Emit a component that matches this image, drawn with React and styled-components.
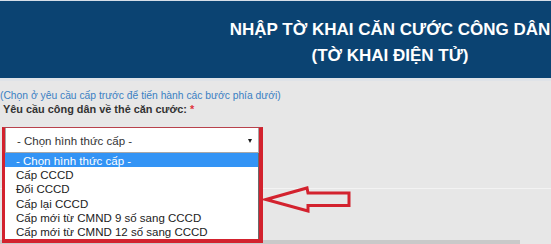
import React from "react";
import styled, { createGlobalStyle } from "styled-components";

const Global = createGlobalStyle`
  html, body { margin: 0; padding: 0; background: #e7e7e7; }
  body { font-family: "Liberation Sans", Arial, sans-serif; }
  * { box-sizing: border-box; }
`;

const Page = styled.div`
  width: 551px;
  height: 244px;
  overflow: hidden;
  background: #e7e7e7;
`;

const Header = styled.header`
  height: 81px;
  background: #0b4372;
  border-top: 1px solid #d6dee8;
  border-bottom: 3px solid #dfe3e8;
  padding: 16px 0 0 229px;
`;

const Title = styled.h1`
  margin: 0;
  color: #ffffff;
  font-size: 17px;
  font-weight: bold;
  line-height: 26px;
  text-align: center;
  white-space: nowrap;
`;

const Hint = styled.p`
  margin: 8px 0 0 0;
  font-size: 10.3px;
  line-height: 13px;
  color: #3a80c3;
  white-space: nowrap;
`;

const Label = styled.label`
  display: block;
  padding-left: 3px;
  font-size: 10.9px;
  line-height: 14px;
  font-weight: bold;
  color: #333333;
`;

const Required = styled.span`
  color: #e0333c;
  margin-left: 3px;
  font-weight: bold;
`;

const FieldArea = styled.div`
  position: relative;
  margin-top: 11px;
`;

const SelectBox = styled.div`
  margin-left: 5px;
  width: 254px;
  height: 26px;
  background: #ffffff;
  border: 1px solid #a8a8a8;
  display: flex;
  align-items: center;
  justify-content: space-between;
  padding: 1px 6px 0 11px;
  font-size: 11.5px;
  color: #333333;
`;

const Caret = styled.span`
  width: 0;
  height: 0;
  border-left: 2.5px solid transparent;
  border-right: 2.5px solid transparent;
  border-top: 4px solid #1a1a1a;
`;

const BehindRows = styled.div`
  height: 91px;
  display: flex;
  flex-direction: column;
  justify-content: space-between;
  padding-top: 35px;
`;

const Divider = styled.div`
  height: 1px;
  background: #f3f3f3;
`;

const GrayBar = styled.div`
  width: 520px;
  height: 4px;
  background: #c9c9c9;
`;

const OptionList = styled.ul`
  position: absolute;
  left: 5px;
  top: 26px;
  width: 254px;
  height: 86px;
  margin: 0;
  padding: 0;
  list-style: none;
  background: #ffffff;
  border-right: 1px solid #6a6a6a;
`;

const Option = styled.li`
  height: 14.2px;
  line-height: 14.2px;
  padding: 1px 0 0 11px;
  font-size: 11.5px;
  white-space: nowrap;
  color: ${(p) => (p.$active ? "#ffffff" : "#222222")};
  background: ${(p) => (p.$active ? "#3394f5" : "transparent")};
`;

const Frame = styled.div`
  position: absolute;
  left: 2px;
  top: 0;
  width: 261px;
  height: 116px;
  border-style: solid;
  border-color: #d3222e;
  border-width: 1px 4px 4px 3px;
  border-top-color: #b8424c;
  pointer-events: none;
`;

const ArrowMark = styled.svg`
  position: absolute;
  left: 262px;
  top: 57px;
`;

const options = [
  "- Chọn hình thức cấp -",
  "Cấp CCCD",
  "Đổi CCCD",
  "Cấp lại CCCD",
  "Cấp mới từ CMND 9 số sang CCCD",
  "Cấp mới từ CMND 12 số sang CCCD",
];

export default function App() {
  return (
    <Page>
      <Global />
      <Header>
        <Title>
          NHẬP TỜ KHAI CĂN CƯỚC CÔNG DÂN
          <br />
          (TỜ KHAI ĐIỆN TỬ)
        </Title>
      </Header>
      <Hint>(Chọn ở yêu cầu cấp trước để tiến hành các bước phía dưới)</Hint>
      <Label>
        Yêu cầu công dân về thẻ căn cước:<Required>*</Required>
      </Label>
      <FieldArea>
        <SelectBox>
          <span>- Chọn hình thức cấp -</span>
          <Caret />
        </SelectBox>
        <BehindRows>
          <Divider />
          <GrayBar />
        </BehindRows>
        <OptionList>
          {options.map((o, i) => (
            <Option key={o} $active={i === 0}>
              {o}
            </Option>
          ))}
        </OptionList>
        <Frame />
        <ArrowMark width="92" height="32" viewBox="262 184 92 32">
          <path
            d="M266 199.5 L307 188 L308 193 L349 193 L349 205.5 L308 205.5 L308 211 Z"
            fill="none"
            stroke="#d3222e"
            strokeWidth="3"
            strokeLinejoin="miter"
          />
        </ArrowMark>
      </FieldArea>
    </Page>
  );
}
